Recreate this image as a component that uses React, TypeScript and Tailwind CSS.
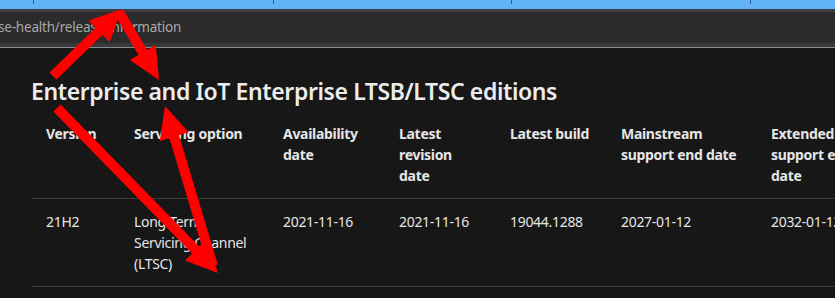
import React from "react";

type Pt = [number, number];

// Builds a filled arrow outline (shaft + triangular head) from start to tip.
function arrowPoints(s: Pt, t: Pt, shaft = 10, headLen = 32, headHalf = 15): string {
  const dx = t[0] - s[0];
  const dy = t[1] - s[1];
  const len = Math.hypot(dx, dy);
  const ux = dx / len;
  const uy = dy / len;
  const nx = -uy;
  const ny = ux;
  const bx = t[0] - ux * headLen;
  const by = t[1] - uy * headLen;
  const w = shaft / 2;
  const pts: Pt[] = [
    [s[0] + nx * w, s[1] + ny * w],
    [bx + nx * w, by + ny * w],
    [bx + nx * headHalf, by + ny * headHalf],
    [t[0], t[1]],
    [bx - nx * headHalf, by - ny * headHalf],
    [bx - nx * w, by - ny * w],
    [s[0] - nx * w, s[1] - ny * w],
  ];
  return pts.map((p) => `${p[0].toFixed(1)},${p[1].toFixed(1)}`).join(" ");
}

const arrows: { s: Pt; t: Pt }[] = [
  { s: [53, 76], t: [122, 9] },
  { s: [119, 12], t: [159, 80] },
  { s: [57, 108], t: [218, 273] },
  { s: [213, 266], t: [165, 106] },
];

const widths = ["w-[88px]", "w-[149px]", "w-[116px]", "w-[111px]", "w-[111px]", "w-[150px]", "w-[150px]"];

const headers: React.ReactNode[] = [
  "Version",
  "Servicing option",
  <>Availability<br />date</>,
  <>Latest<br />revision<br />date</>,
  "Latest build",
  <>Mainstream<br />support end date</>,
  <>Extended<br />support end<br />date</>,
];

const row: React.ReactNode[] = [
  "21H2",
  <>Long Term<br />Servicing Channel<br />(LTSC)</>,
  "2021-11-16",
  "2021-11-16",
  "19044.1288",
  "2027-01-12",
  "2032-01-12",
];

export default function App() {
  return (
    <div
      className="relative w-[835px] h-[298px] overflow-hidden bg-[#171717] text-[#e6e6e6]"
      style={{ fontFamily: '"Noto Sans", "Open Sans", sans-serif' }}
    >
      {/* window tab strip */}
      <div className="relative h-[9px] bg-[#62b2f7]">
        <div className="absolute left-[33px] top-0 h-[4px] w-px bg-[#2d5f8f]" />
        <div className="absolute left-[273px] top-0 h-[4px] w-px bg-[#2d5f8f]" />
        <div className="absolute left-[511px] top-0 h-[4px] w-px bg-[#2d5f8f]" />
        <div className="absolute left-[750px] top-0 h-[4px] w-px bg-[#2d5f8f]" />
      </div>
      <div className="h-[3px] bg-[#3b3d40]" />
      {/* address bar */}
      <div className="h-[31px] bg-[#2b2b2b] flex items-center overflow-hidden">
        <span className="ml-[-2px] text-[13.5px] tracking-[-0.2px] text-[#a8a8a8] whitespace-nowrap">
          se-health/release-information
        </span>
      </div>
      <div className="h-[4px] bg-[#393939]" />
      <div className="h-px bg-[#8a8a8a]" />

      {/* page content */}
      <div className="pl-[31px] pt-[27px]">
        <h2 className="text-[23px] leading-[32px] font-semibold tracking-[-0.4px] whitespace-nowrap text-[#ececec]">
          Enterprise and IoT Enterprise LTSB/LTSC editions
        </h2>
        <div className="mt-[4px] w-[875px] text-[14px] leading-[21px]">
          <div className="flex border-b border-[#3a3a3a] py-[12px]">
            {headers.map((h, i) => (
              <div
                key={i}
                className={`${widths[i]} shrink-0 pl-[15px] font-bold tracking-[-0.3px] whitespace-nowrap`}
              >
                {h}
              </div>
            ))}
          </div>
          <div className="flex border-b border-[#3a3a3a] py-[12px]">
            {row.map((c, i) => (
              <div key={i} className={`${widths[i]} shrink-0 pl-[15px] tracking-[-0.3px] whitespace-nowrap`}>
                {c}
              </div>
            ))}
          </div>
        </div>
      </div>

      {/* annotation arrows */}
      <svg className="absolute inset-0 pointer-events-none" width={835} height={298}>
        {arrows.map((a, i) => (
          <polygon key={i} points={arrowPoints(a.s, a.t)} fill="#ff0000" />
        ))}
      </svg>
    </div>
  );
}
